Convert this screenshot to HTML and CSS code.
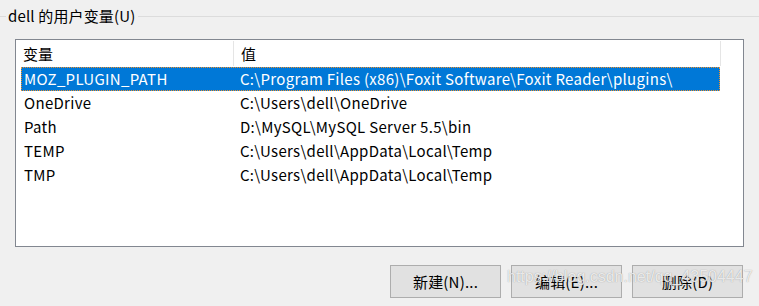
FILE: index.html
```html
<!DOCTYPE html>
<html lang="zh-CN">
<head>
    <meta charset="UTF-8">
    <title>用户变量</title>
    <link rel="stylesheet" href="styles.css">
</head>
<body>
    <div class="group">
        <div class="group-title">
            <span class="line short"></span>
            <span class="caption">dell 的用户变量(U)</span>
            <span class="line"></span>
        </div>

        <div class="listbox">
            <div class="list-head">
                <div class="head-cell name">变量</div>
                <div class="head-cell value">值</div>
            </div>
            <div class="row selected">
                <div class="cell name">MOZ_PLUGIN_PATH</div>
                <div class="cell value">C:\Program Files (x86)\Foxit Software\Foxit Reader\plugins\</div>
            </div>
            <div class="row">
                <div class="cell name">OneDrive</div>
                <div class="cell value">C:\Users\dell\OneDrive</div>
            </div>
            <div class="row">
                <div class="cell name">Path</div>
                <div class="cell value">D:\MySQL\MySQL Server 5.5\bin</div>
            </div>
            <div class="row">
                <div class="cell name">TEMP</div>
                <div class="cell value">C:\Users\dell\AppData\Local\Temp</div>
            </div>
            <div class="row">
                <div class="cell name">TMP</div>
                <div class="cell value">C:\Users\dell\AppData\Local\Temp</div>
            </div>
        </div>

        <div class="buttons">
            <button class="btn">新建(N)...</button>
            <button class="btn">编辑(E)...</button>
            <button class="btn">删除(D)</button>
        </div>
    </div>

    <div class="watermark">https://blog.csdn.net/qq_43504447</div>
</body>
</html>
```

FILE: styles.css
```css
body {
    margin: 0;
    width: 759px;
    height: 306px;
    overflow: hidden;
    background-color: #f0f0f0;
    font-family: "Noto Sans CJK SC", "Noto Sans", sans-serif;
    font-size: 15px;
    color: #000;
    position: relative;
}
.group-title {
    display: flex;
    align-items: center;
    height: 32px;
}
.line {
    flex: 1;
    height: 1px;
    background-color: #dcdcdc;
}
.line.short {
    flex: 0 0 6px;
}
.caption {
    padding: 0 3px 0 2px;
    line-height: 20px;
    letter-spacing: 0.15px;
}
.listbox {
    margin: 7px 0 0 15px;
    width: 729px;
    height: 208px;
    border: 1px solid #828790;
    background: #fff;
    box-sizing: border-box;
}
.list-head {
    display: flex;
    height: 27px;
}
.head-cell {
    padding: 1px 0 0 7px;
    line-height: 24px;
    border-right: 1px solid #e5e5e5;
    height: 25px;
    margin-top: 1px;
    box-sizing: border-box;
}
.head-cell.name {
    width: 218px;
}
.head-cell.value {
    width: 487px;
}
.row {
    display: flex;
    margin-left: 5px;
    width: 699px;
    height: 24px;
    line-height: 22px;
    box-sizing: border-box;
    border: 1px solid transparent;
    letter-spacing: 0.3px;
}
.row.selected {
    background-color: #0078d7;
    color: #fff;
    border: 1px dotted #f0902a;
}
.cell.name {
    width: 212px;
    padding-left: 2px;
    box-sizing: border-box;
}
.cell.value {
    padding-left: 6px;
    white-space: nowrap;
}
.buttons {
    display: flex;
    justify-content: flex-end;
    gap: 10px;
    margin: 18px 16px 0 0;
}
.btn {
    width: 111px;
    height: 33px;
    background-color: #e1e1e1;
    border: 1px solid #adadad;
    font-family: "Noto Sans CJK SC", "Noto Sans", sans-serif;
    font-size: 15px;
    letter-spacing: 0.2px;
    color: #000;
    padding: 0;
}
.watermark {
    position: absolute;
    left: 507px;
    top: 268px;
    font-family: "Liberation Sans", Arial, sans-serif;
    font-size: 16px;
    color: rgba(255, 255, 255, 0.8);
    text-shadow: 0 0 1px rgba(110, 110, 110, 0.7);
    white-space: nowrap;
    pointer-events: none;
}
```
